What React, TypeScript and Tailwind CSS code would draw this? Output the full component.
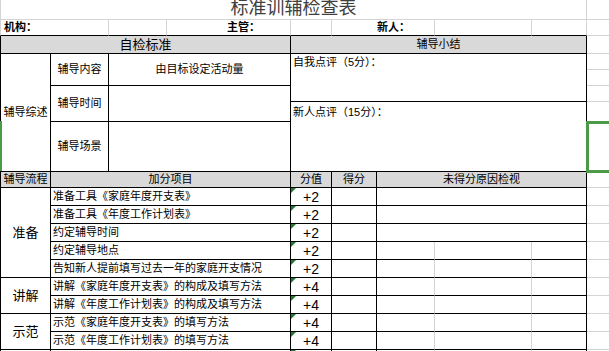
import React from 'react';

type Edge = 'k' | 'g';

const rightEdge: Record<Edge, string> = { k: 'border-r-black', g: 'border-r-[#d4d4d4]' };
const bottomEdge: Record<Edge, string> = { k: 'border-b-black', g: 'border-b-[#d4d4d4]' };

interface CellProps extends React.TdHTMLAttributes<HTMLTableCellElement> {
  r?: Edge;
  b?: Edge;
  l?: Edge;
}

const Cell: React.FC<CellProps> = ({ r = 'k', b = 'k', l, className = '', children, ...rest }) => (
  <td
    className={`p-0 border-r border-b ${rightEdge[r]} ${bottomEdge[b]} ${
      l === 'k' ? 'border-l border-l-black' : l === 'g' ? 'border-l border-l-[#d4d4d4]' : ''
    } ${className}`}
    {...rest}
  >
    {children}
  </td>
);

// sheet gridline cell on the right of the form
const Spare = () => <Cell r="g" b="g" />;

const Flag = () => (
  <span className="absolute top-0 left-0 w-0 h-0 border-t-[5px] border-r-[5px] border-t-[#1e7b34] border-r-transparent" />
);

const items = [
  { group: '准备', span: 5, text: '准备工具《家庭年度开支表》', score: '+2', merged: true },
  { text: '准备工具《年度工作计划表》', score: '+2', merged: true },
  { text: '约定辅导时间', score: '+2', merged: true },
  { text: '约定辅导地点', score: '+2' },
  { text: '告知新人提前填写过去一年的家庭开支情况', score: '+2' },
  { group: '讲解', span: 2, text: '讲解《家庭年度开支表》的构成及填写方法', score: '+4' },
  { text: '讲解《年度工作计划表》的构成及填写方法', score: '+4' },
  { group: '示范', span: 2, text: '示范《家庭年度开支表》的填写方法', score: '+4' },
  { text: '示范《年度工作计划表》的填写方法', score: '+4' },
];

export default function App() {
  return (
    <div className="relative w-[609px] h-[351px] overflow-hidden bg-white text-black font-['Liberation_Sans','Noto_Sans_CJK_SC',sans-serif] text-[11px] leading-none">
      <table className="table-fixed border-separate border-spacing-0 w-[651px]">
        <colgroup>
          <col className="w-[51px]" />
          <col className="w-[58px]" />
          <col className="w-[58px]" />
          <col className="w-[124px]" />
          <col className="w-[41px]" />
          <col className="w-[45px]" />
          <col className="w-[58px]" />
          <col className="w-[97px]" />
          <col className="w-[55px]" />
          <col className="w-[64px]" />
        </colgroup>
        <tbody>
          <tr className="h-[20px]">
            <Cell colSpan={9} l="g" r="g" b="g" className="text-center align-top text-[18px] text-[#404040]">
              <div className="-mt-[1px] leading-[18px]">标准训辅检查表</div>
            </Cell>
            <Spare />
          </tr>
          <tr className="h-[16px]">
            <Cell colSpan={2} l="g" r="g" className="font-bold pl-[3px]">机构：</Cell>
            <Cell r="g" />
            <Cell r="g" className="font-bold pl-[60px]">主管：</Cell>
            <Cell r="g" />
            <Cell colSpan={2} r="g" className="font-bold pl-[45px]">新人：</Cell>
            <Cell r="g" />
            <Cell r="g" />
            <Spare />
          </tr>
          <tr className="h-[18px]">
            <Cell colSpan={4} l="k" className="bg-[#d9d9d9] text-center text-[13px]">自检标准</Cell>
            <Cell colSpan={5} className="bg-[#d9d9d9] text-center">辅导小结</Cell>
            <Spare />
          </tr>
          <tr className="h-[16px]">
            <Cell rowSpan={5} l="k" className="text-center">辅导综述</Cell>
            <Cell rowSpan={2} className="text-center">辅导内容</Cell>
            <Cell rowSpan={2} colSpan={2} className="text-center">由目标设定活动量</Cell>
            <Cell rowSpan={3} colSpan={5} className="align-top pl-[2px] pt-[3px]">自我点评（5分）：</Cell>
            <Spare />
          </tr>
          <tr className="h-[16px]">
            <Spare />
          </tr>
          <tr className="h-[16px]">
            <Cell rowSpan={2} className="text-center">辅导时间</Cell>
            <Cell rowSpan={2} colSpan={2} />
            <Spare />
          </tr>
          <tr className="h-[20px]">
            <Cell rowSpan={2} colSpan={5} className="align-top pl-[2px] pt-[5px]">新人点评（15分）：</Cell>
            <Spare />
          </tr>
          <tr className="h-[50px]">
            <Cell className="text-center">辅导场景</Cell>
            <Cell colSpan={2} />
            <Spare />
          </tr>
          <tr className="h-[16px]">
            <Cell l="k" className="bg-[#d9d9d9] text-center">辅导流程</Cell>
            <Cell colSpan={3} className="bg-[#d9d9d9] text-center">加分项目</Cell>
            <Cell className="bg-[#d9d9d9] text-center">分值</Cell>
            <Cell className="bg-[#d9d9d9] text-center">得分</Cell>
            <Cell colSpan={3} className="bg-[#d9d9d9] text-center">未得分原因检视</Cell>
            <Spare />
          </tr>
          {items.map((item, i) => (
            <tr key={i} className="h-[18px]">
              {item.group && (
                <Cell rowSpan={item.span} l="k" className="text-center text-[13px]">
                  {item.group}
                </Cell>
              )}
              <Cell colSpan={3} className="pl-[2px] whitespace-nowrap">{item.text}</Cell>
              <Cell className="relative text-center text-[14px]">
                <Flag />
                {item.score}
              </Cell>
              <Cell />
              {item.merged ? (
                <Cell colSpan={3} />
              ) : (
                <>
                  <Cell r="g" />
                  <Cell r="g" />
                  <Cell />
                </>
              )}
              <Spare />
            </tr>
          ))}
          <tr className="h-[18px]">
            <Cell l="k" />
            <Cell colSpan={3} />
            <Cell className="relative">
              <Flag />
            </Cell>
            <Cell />
            <Cell r="g" />
            <Cell r="g" />
            <Cell />
            <Spare />
          </tr>
        </tbody>
      </table>

      {/* excel selection frame */}
      <div className="absolute left-[586px] top-[121px] w-[40px] h-[52px] border-[3px] border-r-0 border-[#4c9a47]" />
      <div className="absolute left-0 top-[121px] w-[2px] h-[50px] bg-[#4c9a47]" />
    </div>
  );
}
